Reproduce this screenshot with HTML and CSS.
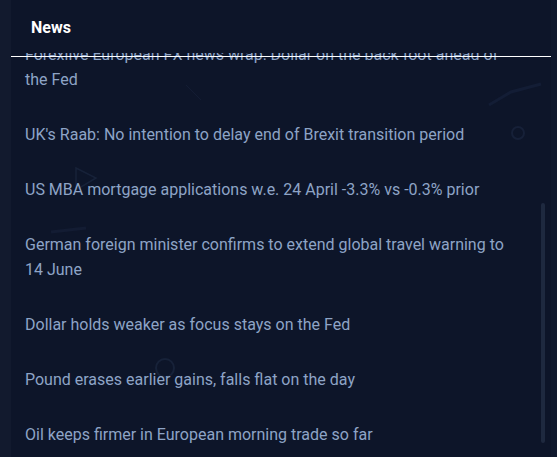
FILE: index.html
```html
<!DOCTYPE html>
<html>
<head>
<meta charset="UTF-8">
<title>News</title>
<link rel="stylesheet" href="styles.css">
</head>
<body>
    <div class="app">
        <div class="rail"></div>
        <div class="panel">
            <svg class="decor" width="540" height="457" viewBox="0 0 540 457">
                <path d="M65 168 L85 178 L65 190 Z" fill="none" stroke="#172239" stroke-width="1.5"/>
                <circle cx="154" cy="368" r="9" fill="none" stroke="#172239" stroke-width="2"/>
                <circle cx="507" cy="133" r="6" fill="none" stroke="#162038" stroke-width="2"/>
                <path d="M478 105 L500 92 L530 84" fill="none" stroke="#131d35" stroke-width="3"/>
                <path d="M175 85 L190 100" fill="none" stroke="#131c33" stroke-width="1"/>
                <path d="M40 232 L75 228" fill="none" stroke="#131c33" stroke-width="3"/>
            </svg>
            <div class="header">News</div>
            <hr class="divider">
            <ul class="news-list">
                <li>Forexlive European FX news wrap: Dollar on the back foot ahead of the Fed</li>
                <li>UK's Raab: No intention to delay end of Brexit transition period</li>
                <li>US MBA mortgage applications w.e. 24 April -3.3% vs -0.3% prior</li>
                <li>German foreign minister confirms to extend global travel warning to 14 June</li>
                <li>Dollar holds weaker as focus stays on the Fed</li>
                <li>Pound erases earlier gains, falls flat on the day</li>
                <li>Oil keeps firmer in European morning trade so far</li>
            </ul>
            <div class="scroll-thumb"></div>
        </div>
        <div class="edge"></div>
    </div>
</body>
</html>
```

FILE: styles.css
```css
body {
    margin: 0;
    padding: 0;
    background: #0d1529;
    font-family: Roboto, "Liberation Sans", sans-serif;
    overflow: hidden;
}
.app {
    display: flex;
    height: 457px;
}
.rail {
    width: 11px;
    background: #121a2e;
}
.panel {
    flex: 1;
    position: relative;
    overflow: hidden;
    background: #0d1529;
}
.edge {
    width: 6px;
    background: #0f182d;
}
.decor {
    position: absolute;
    top: 0;
    left: 0;
}
.header {
    position: relative;
    z-index: 1;
    height: 52px;
    padding-top: 1px;
    display: flex;
    align-items: center;
    padding-left: 20px;
    background: #0d1529;
    color: #ffffff;
    font-size: 16px;
    font-weight: bold;
}
.divider {
    position: absolute;
    z-index: 2;
    top: 56px;
    left: 0;
    width: 540px;
    margin: 0;
    border: none;
    height: 1px;
    background: #ffffff;
}
.news-list {
    position: relative;
    list-style: none;
    margin: -26px 0 0 0;
    padding: 0;
}
.news-list li {
    padding: 15px 30px 15px 14px;
    font-size: 16px;
    line-height: 25px;
    color: #8ea4c6;
}
.scroll-thumb {
    position: absolute;
    z-index: 2;
    top: 203px;
    left: 530px;
    width: 4px;
    height: 240px;
    border-radius: 2px;
    background: #1e293f;
}
```
